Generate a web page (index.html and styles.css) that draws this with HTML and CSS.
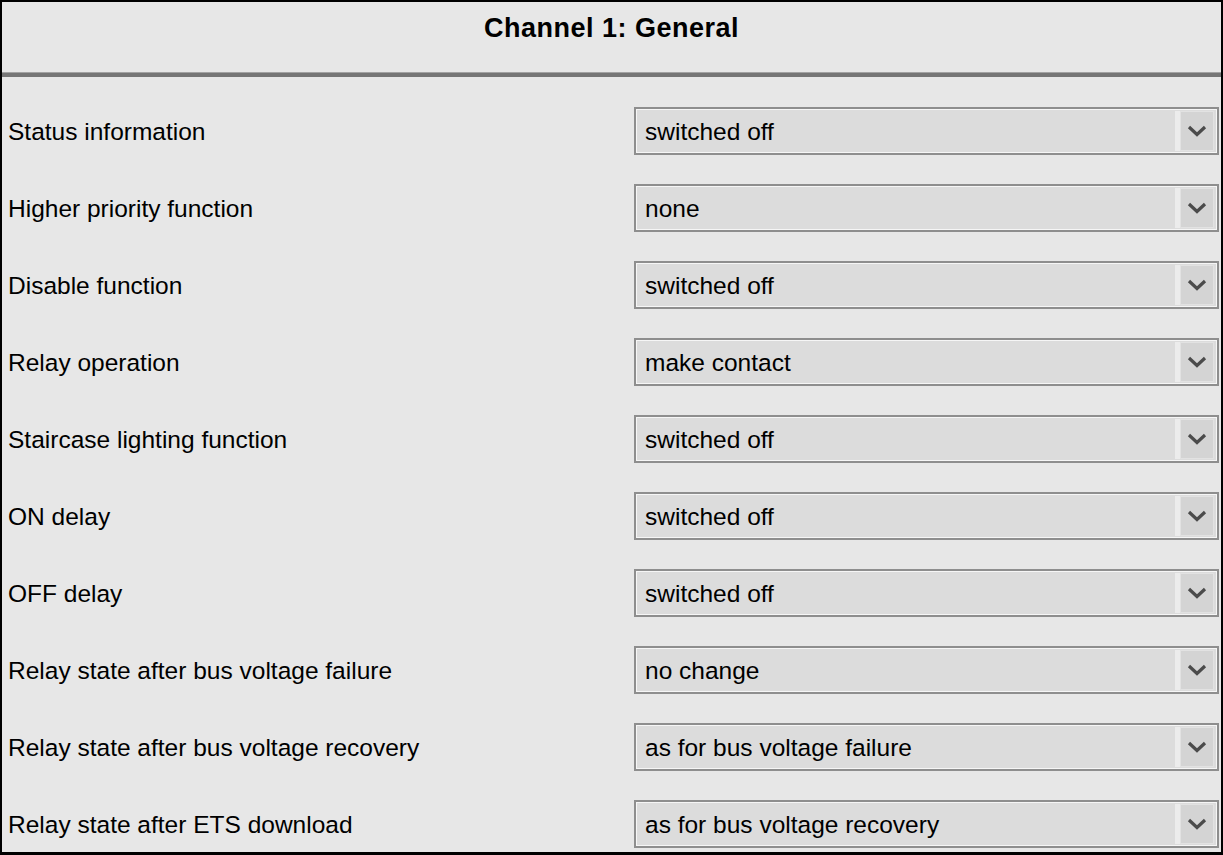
FILE: index.html
```html
<!DOCTYPE html>
<html>
<head>
<meta charset="utf-8">
<link rel="stylesheet" href="styles.css">
</head>
<body>
<div class="panel">
  <div class="header"><h1 class="title">Channel 1: General</h1></div>
  <div class="divider"></div>
  <div class="rows">
    <div class="row"><span class="label">Status information</span><div class="select"><span class="value">switched off</span><span class="btn"><svg width="20" height="12" viewBox="0 0 20 12"><polyline points="2,2 10,9.5 18,2" fill="none" stroke="#4b4b4b" stroke-width="3.2"/></svg></span></div></div>
    <div class="row"><span class="label">Higher priority function</span><div class="select"><span class="value">none</span><span class="btn"><svg width="20" height="12" viewBox="0 0 20 12"><polyline points="2,2 10,9.5 18,2" fill="none" stroke="#4b4b4b" stroke-width="3.2"/></svg></span></div></div>
    <div class="row"><span class="label">Disable function</span><div class="select"><span class="value">switched off</span><span class="btn"><svg width="20" height="12" viewBox="0 0 20 12"><polyline points="2,2 10,9.5 18,2" fill="none" stroke="#4b4b4b" stroke-width="3.2"/></svg></span></div></div>
    <div class="row"><span class="label">Relay operation</span><div class="select"><span class="value">make contact</span><span class="btn"><svg width="20" height="12" viewBox="0 0 20 12"><polyline points="2,2 10,9.5 18,2" fill="none" stroke="#4b4b4b" stroke-width="3.2"/></svg></span></div></div>
    <div class="row"><span class="label">Staircase lighting function</span><div class="select"><span class="value">switched off</span><span class="btn"><svg width="20" height="12" viewBox="0 0 20 12"><polyline points="2,2 10,9.5 18,2" fill="none" stroke="#4b4b4b" stroke-width="3.2"/></svg></span></div></div>
    <div class="row"><span class="label">ON delay</span><div class="select"><span class="value">switched off</span><span class="btn"><svg width="20" height="12" viewBox="0 0 20 12"><polyline points="2,2 10,9.5 18,2" fill="none" stroke="#4b4b4b" stroke-width="3.2"/></svg></span></div></div>
    <div class="row"><span class="label">OFF delay</span><div class="select"><span class="value">switched off</span><span class="btn"><svg width="20" height="12" viewBox="0 0 20 12"><polyline points="2,2 10,9.5 18,2" fill="none" stroke="#4b4b4b" stroke-width="3.2"/></svg></span></div></div>
    <div class="row"><span class="label">Relay state after bus voltage failure</span><div class="select"><span class="value">no change</span><span class="btn"><svg width="20" height="12" viewBox="0 0 20 12"><polyline points="2,2 10,9.5 18,2" fill="none" stroke="#4b4b4b" stroke-width="3.2"/></svg></span></div></div>
    <div class="row"><span class="label">Relay state after bus voltage recovery</span><div class="select"><span class="value">as for bus voltage failure</span><span class="btn"><svg width="20" height="12" viewBox="0 0 20 12"><polyline points="2,2 10,9.5 18,2" fill="none" stroke="#4b4b4b" stroke-width="3.2"/></svg></span></div></div>
    <div class="row"><span class="label">Relay state after ETS download</span><div class="select"><span class="value">as for bus voltage recovery</span><span class="btn"><svg width="20" height="12" viewBox="0 0 20 12"><polyline points="2,2 10,9.5 18,2" fill="none" stroke="#4b4b4b" stroke-width="3.2"/></svg></span></div></div>
  </div>
</div>
</body>
</html>
```
FILE: styles.css
```css
html, body {
  margin: 0;
  padding: 0;
  background: #000;
}
.panel {
  box-sizing: border-box;
  width: 1223px;
  height: 855px;
  border: 2px solid #000;
  border-bottom-width: 3px;
  background: #e7e7e7;
  overflow: hidden;
  font-family: "Liberation Sans", Arial, sans-serif;
  color: #000;
}
.header {
  height: 70px;
  display: flex;
  justify-content: center;
  box-sizing: border-box;
  padding-top: 11px;
}
.title {
  margin: 0;
  font-size: 27px;
  font-weight: bold;
  line-height: 30px;
  letter-spacing: 0.5px;
}
.divider {
  height: 4px;
  border-top: 1px solid #a3a3a3;
  background: #767676;
}
.rows {
  padding-top: 15px;
}
.row {
  height: 77px;
  display: grid;
  grid-template-columns: 1fr 585px;
  align-items: center;
  padding-left: 6px;
  padding-right: 2px;
}
.label {
  font-size: 24.5px;
  line-height: 28px;
  padding-top: 2px;
}
.select {
  box-sizing: border-box;
  height: 48px;
  border: 2px solid #8e8e8e;
  background: #dcdcdc;
  box-shadow: inset 0 0 0 1px #f6f6f6;
  display: flex;
  align-items: center;
  padding: 3px 3px 2px 9px;
}
.value {
  flex: 1;
  font-size: 24.5px;
  line-height: 28px;
  padding-top: 2px;
}
.btn {
  box-sizing: border-box;
  width: 34px;
  height: 40px;
  background: #d4d4d4;
  border: 1px solid #e2e2e2;
  box-shadow: -5px 0 0 #ececec;
  display: flex;
  align-items: center;
  justify-content: center;
}
.btn svg {
  display: block;
}
```
